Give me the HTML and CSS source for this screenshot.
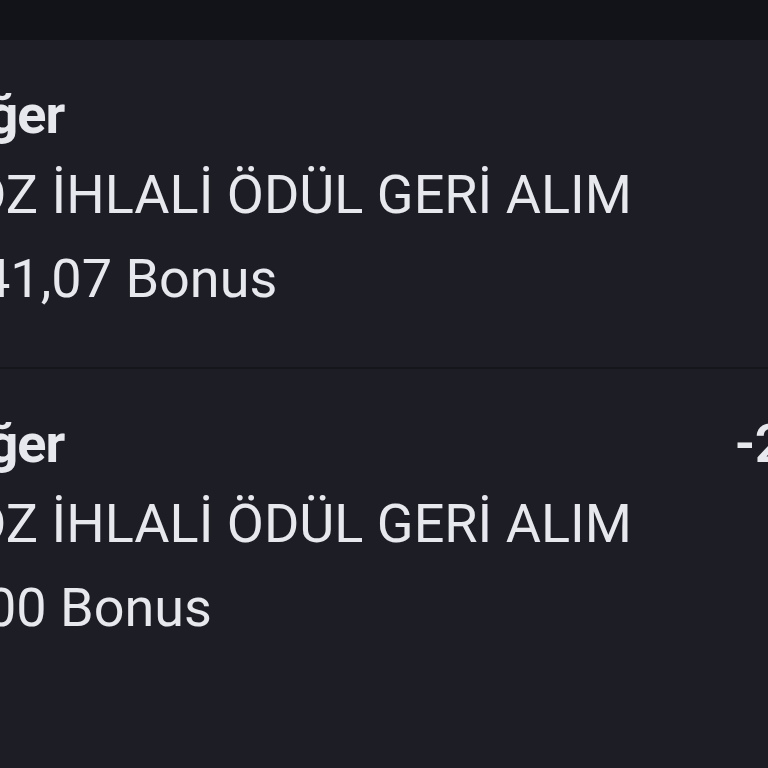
FILE: index.html
```html
<!DOCTYPE html>
<html lang="tr">
<head>
<meta charset="utf-8">
<title>İşlemler</title>
<link rel="stylesheet" href="styles.css">
</head>
<body>
<div class="topbar"></div>
<main class="list">
  <section class="entry">
    <div class="info">
      <div class="title">Diğer</div>
      <div class="desc">DZ İHLALİ ÖDÜL GERİ ALIM</div>
      <div class="value v1">41,07 Bonus</div>
    </div>
  </section>
  <section class="entry">
    <div class="info">
      <div class="title">Diğer</div>
      <div class="desc">DZ İHLALİ ÖDÜL GERİ ALIM</div>
      <div class="value v2">00 Bonus</div>
    </div>
    <div class="amount">-200,00</div>
  </section>
</main>
</body>
</html>
```
FILE: styles.css
```css
html, body {
  margin: 0;
  padding: 0;
  background: #1c1d25;
  overflow: hidden;
  width: 768px;
  height: 768px;
}
body {
  font-family: Roboto, "Noto Sans", sans-serif;
  color: #e7e8ed;
}
.topbar {
  height: 40px;
  background: #121318;
}
.list {
  display: flex;
  flex-direction: column;
}
.entry {
  display: grid;
  grid-template-columns: 795px max-content;
  margin-left: -60px;
  width: 1000px;
  padding: 35px 0 44px;
  border-bottom: 2px solid #15161b;
}
.entry:last-child {
  border-bottom: none;
}
.info {
  display: flex;
  flex-direction: column;
  white-space: nowrap;
}
.title {
  font-size: 54px;
  font-weight: 700;
  line-height: 80px;
  letter-spacing: -1px;
}
.desc {
  font-size: 54px;
  font-weight: 400;
  line-height: 80px;
  text-indent: 31px;
}
.value {
  font-size: 54px;
  font-weight: 400;
  line-height: 88px;
}
.v1 { text-indent: 40px; }
.v2 { text-indent: 46px; }
.amount {
  font-size: 54px;
  font-weight: 600;
  line-height: 80px;
  white-space: nowrap;
}
```
